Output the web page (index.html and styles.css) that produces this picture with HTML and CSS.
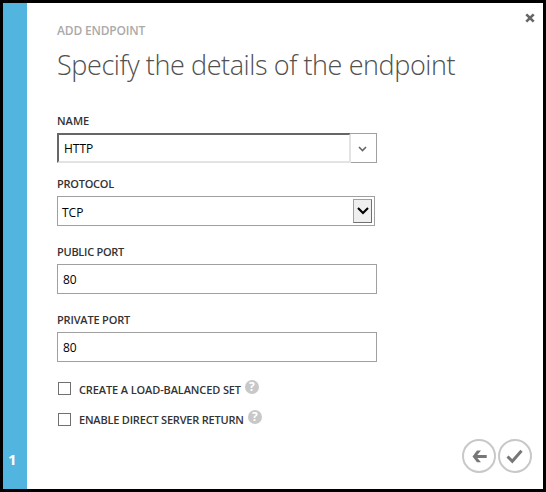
FILE: index.html
```
<!DOCTYPE html>
<html lang="en">
<head>
<meta charset="utf-8">
<title>Add Endpoint</title>
<link rel="stylesheet" href="styles.css">
</head>
<body>
<div class="dialog">
  <aside class="steps"><span class="step">1</span></aside>
  <main class="content">
    <header class="header">
      <div class="eyebrow"><span class="eyebrow-text">ADD ENDPOINT</span></div>
      <h1 class="title">Specify the details of the endpoint</h1>
    </header>
    <form class="form">
      <div class="field field-name">
        <div class="label name-label">NAME</div>
        <div class="combo">
          <div class="combo-input">HTTP</div>
          <div class="combo-toggle"><svg width="9" height="6" viewBox="0 0 9 6"><path d="M1 1 4.5 4.5 8 1" fill="none" stroke="#666" stroke-width="1.6"/></svg></div>
        </div>
      </div>
      <div class="field field-protocol">
        <div class="label protocol-label">PROTOCOL</div>
        <div class="select"><span>TCP</span>
          <div class="select-toggle"><svg width="12" height="8" viewBox="0 0 12 8"><path d="M1 1 6 6 11 1" fill="none" stroke="#000" stroke-width="2.1"/></svg></div>
        </div>
      </div>
      <div class="field field-port">
        <div class="label public-label">PUBLIC PORT</div>
        <div class="input">80</div>
      </div>
      <div class="field field-port">
        <div class="label private-label">PRIVATE PORT</div>
        <div class="input">80</div>
      </div>
      <div class="option option-first">
        <span class="box"></span><span class="option-text balanced">CREATE A LOAD-BALANCED SET</span><span class="help">?</span>
      </div>
      <div class="option option-second">
        <span class="box"></span><span class="option-text direct">ENABLE DIRECT SERVER RETURN</span><span class="help">?</span>
      </div>
    </form>
  </main>
  <svg class="close" width="10" height="10" viewBox="0 0 10 10"><path d="M1.3 1.3 8.7 8.7M8.7 1.3 1.3 8.7" stroke="#666" stroke-width="2.6"/></svg>
  <nav class="actions">
    <svg width="34" height="34" viewBox="0 0 34 34"><circle cx="17" cy="17" r="16" fill="#fff" stroke="#c8c8c8" stroke-width="2"/><path d="M24.700 17.500H13" fill="none" stroke="#777" stroke-width="3"/><path d="M15 11.500H19L14 17.500 19 23.300H15L10.500 17.500Z" fill="#777"/></svg>
    <svg width="34" height="34" viewBox="0 0 34 34"><circle cx="17" cy="17" r="16" fill="#fff" stroke="#c8c8c8" stroke-width="2"/><path d="M9.500 17.500 14.300 22.300 23.500 11.700" fill="none" stroke="#777" stroke-width="3"/></svg>
  </nav>
</div>
</body>
</html>
```
FILE: styles.css
```
* { box-sizing: border-box; }
body { margin: 0; font-family: "Open Sans", sans-serif; background: #000; }
.dialog { position: relative; display: flex; width: 546px; height: 492px; border: 3px solid #000; background: #fff; }
.steps { display: flex; width: 24px; align-items: flex-end; background: #51b5e0; }
.step { padding: 0 0 20px 5px; color: #fff; font-size: 15px; line-height: 20px; font-weight: 700; }
.content { flex: 1; padding: 18px 0 0 30px; }
.eyebrow { height: 20px; color: #aaa; font-size: 12px; line-height: 20px; font-weight: 600; letter-spacing: -0.17px; }
.title { height: 40px; margin: 4px 0 0; color: #505050; font-size: 27px; line-height: 40px; font-weight: 300; letter-spacing: -0.41px; white-space: nowrap; }
.form { padding-top: 28px; }
.label { height: 16px; margin-bottom: 4px; color: #333; font-size: 11px; line-height: 16px; font-weight: 600; white-space: nowrap; }
.protocol-label { letter-spacing: -0.25px; }
.public-label { letter-spacing: -0.27px; }
.private-label { letter-spacing: -0.17px; }
.field { height: 63px; }
.field-protocol, .field-port { height: 68px; }
.combo { display: flex; width: 320px; height: 30px; }
.combo-input { width: 294px; height: 30px; padding-left: 5px; border: 2px solid #666; border-right-color: #e3e3e3; border-bottom-color: #e3e3e3; font-size: 12px; line-height: 28px; }
.combo-toggle { display: flex; width: 26px; align-items: center; justify-content: center; padding-right: 2px; padding-top: 2px; border: 1px solid #a0a0a0; border-left: 0; }
.input { width: 320px; height: 30px; padding-left: 5px; border: 1px solid #a0a0a0; font-size: 12px; line-height: 29px; }
.select { display: flex; width: 318px; height: 30px; align-items: center; justify-content: space-between; padding: 0 2px 0 4px; border: 1px solid #a0a0a0; font-size: 12px; }
.select span { padding-top: 2px; }
.select-toggle { display: flex; width: 19px; height: 24px; align-items: center; justify-content: center; border: 1px solid #707070; border-top-color: #a0a0a0; border-left-color: #a0a0a0; background: #efefef; }
.option { display: flex; height: 31px; align-items: flex-start; }
.option-first { height: 30px; }
.box { width: 13px; height: 13px; margin: 2px 8px 0 1px; border: 1px solid #707070; }
.option-second .box { margin-top: 3px; }
.option-text { height: 16px; margin-top: 2px; color: #333; font-size: 11px; line-height: 16px; font-weight: 600; white-space: nowrap; }
.balanced { letter-spacing: -0.12px; }
.direct { letter-spacing: -0.2px; }
.help { width: 14px; height: 14px; margin-left: 4px; border-radius: 50%; background: #c8c8c8; color: #fff; font-size: 12px; line-height: 14px; font-weight: 700; text-align: center; }
.close { position: absolute; top: 10px; right: 8px; }
.actions { position: absolute; right: 11px; bottom: 16px; display: flex; gap: 2px; }
```
